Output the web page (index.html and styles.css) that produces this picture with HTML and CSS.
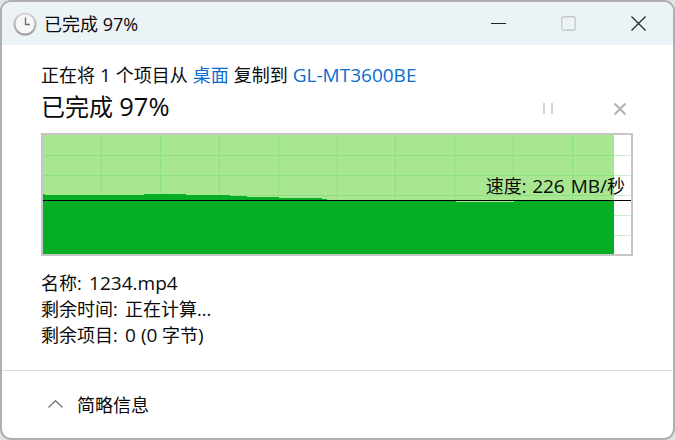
FILE: index.html
```html
<!DOCTYPE html>
<html lang="zh-CN">
<head>
  <meta charset="UTF-8">
  <title>已完成 97%</title>
  <link rel="stylesheet" href="styles.css">
</head>
<body>
  <div class="window">
    <div class="titlebar">
      <svg class="clock" width="24" height="24" viewBox="0 0 24 24">
        <defs>
          <linearGradient id="ring" x1="0" y1="0" x2="0" y2="1">
            <stop offset="0" stop-color="#d8d8d8"/>
            <stop offset="1" stop-color="#9a9a9a"/>
          </linearGradient>
        </defs>
        <circle cx="12" cy="12" r="11.5" fill="url(#ring)"/>
        <circle cx="12" cy="12" r="9.5" fill="#f6f6f6"/>
        <path d="M12.5 5.5V12.5H17" fill="none" stroke="#707070" stroke-width="1.4"/>
      </svg>
      <span class="title">已完成 97%</span>
      <div class="winbtns">
        <svg width="15" height="15" viewBox="0 0 15 15"><path d="M0 7.5H15" stroke="#222" stroke-width="1"/></svg>
        <svg width="15" height="15" viewBox="0 0 15 15"><rect x="0.75" y="0.75" width="13.5" height="13.5" rx="2" fill="none" stroke="#c4c8ca" stroke-width="1.3"/></svg>
        <svg width="15" height="15" viewBox="0 0 15 15"><path d="M0.5 0.5L14.5 14.5M14.5 0.5L0.5 14.5" stroke="#222" stroke-width="1.2"/></svg>
      </div>
    </div>

    <div class="content">
      <p class="from">正在将 <span class="lat">1</span> 个项目从 <a class="place">桌面</a> 复制到 <a class="place lat">GL-MT3600BE</a></p>
      <div class="status">
        <h1>已完成 <span class="pct">97%</span></h1>
        <div class="ctrls">
          <svg width="10" height="12" viewBox="0 0 10 12"><path d="M1 0V11M9 0V11" stroke="#c8c8c8" stroke-width="1.6"/></svg>
          <svg width="12" height="12" viewBox="0 0 12 12"><path d="M0.5 0.5L11.5 11.5M11.5 0.5L0.5 11.5" stroke="#b4b4b4" stroke-width="2.2"/></svg>
        </div>
      </div>

      <div class="chart">
        <svg width="588" height="119" viewBox="43 135 588 119">
          <g stroke="#c6efc6" stroke-width="1">
            <path d="M43 155.5H631M43 175.5H631M43 195.5H631M43 215.5H631M43 235.5H631"/>
          </g>
          <rect x="43" y="135" width="571" height="119" fill="#a9e691"/>
          <g stroke="#8fdf85" stroke-width="1">
            <path d="M43 155.5H614M43 175.5H614M43 195.5H614"/>
            <path d="M101.5 135V201M160.5 135V201M219.5 135V201M278.5 135V201M337.5 135V201M395.5 135V201M454.5 135V201M513.5 135V201M572.5 135V201"/>
          </g>
          <path fill="#06ae25" d="M43 194H45V195H144V194H186V195H230V196H247V197H279V198H322V199H327V200H385V201H456V202H514V201H614V254H43Z"/>
          <path d="M43 200.5H631" stroke="#000" stroke-width="1"/>
        </svg>
        <span class="speed">速度: <span class="lat">226 MB/</span>秒</span>
      </div>

      <div class="details">
        <div>名称: &nbsp;<span class="val lat">1234.mp4</span></div>
        <div>剩余时间: &nbsp;<span class="val">正在计算...</span></div>
        <div>剩余项目: &nbsp;<span class="val"><span class="lat">0 (0</span> 字节<span class="lat">)</span></span></div>
      </div>
    </div>

    <div class="footer">
      <svg width="15" height="8" viewBox="0 0 15 8"><path d="M0.5 7.5L7.5 0.7L14.5 7.5" fill="none" stroke="#777" stroke-width="1.3"/></svg>
      <span>简略信息</span>
    </div>
  </div>
</body>
</html>
```

FILE: styles.css
```css
html, body {
  margin: 0;
  padding: 0;
  background: #e4e4e4;
}

body {
  font-family: "Open Sans", "Noto Sans CJK SC", sans-serif;
  color: #0a0a0a;
  font-size: 18px;
}

.lat {
  font-size: 19px;
}

.window {
  width: 675px;
  height: 440px;
  box-sizing: border-box;
  border: 2px solid #b0b0b0;
  border-radius: 11px;
  background: #fff;
  overflow: hidden;
  display: flex;
  flex-direction: column;
}

.titlebar {
  height: 43px;
  flex: none;
  background: #ecf3f7;
  display: flex;
  align-items: center;
  padding-left: 11px;
}

.clock {
  margin-right: 7px;
}

.title {
  line-height: 24px;
}

.winbtns {
  margin-left: auto;
  margin-right: 27px;
  display: flex;
  width: 155px;
  justify-content: space-between;
}

.content {
  padding: 17px 0 0 39px;
  flex: 1;
}

.from {
  margin: 0;
  line-height: 26px;
  word-spacing: 0.3px;
}

.place {
  color: #0a6cce;
}

.status {
  display: flex;
  align-items: center;
  height: 30px;
  margin-top: 3px;
  margin-bottom: 12px;
}

h1 {
  margin: 0;
  font-size: 24px;
  font-weight: 400;
  line-height: 30px;
}

.pct {
  font-size: 25.5px;
}

.ctrls {
  margin-top: 6px;
  margin-left: auto;
  margin-right: 47px;
  display: flex;
  gap: 61px;
}

.chart {
  position: relative;
  width: 588px;
  height: 119px;
  border: 2px solid #c6c6c6;
  line-height: 0;
}

.speed {
  position: absolute;
  right: 6px;
  top: 39px;
  line-height: 24px;
  word-spacing: 1px;
}

.details {
  margin-top: 14px;
  line-height: 26px;
}

.val {
  margin-left: -2px;
}

.footer {
  height: 68px;
  box-sizing: border-box;
  flex: none;
  border-top: 1px solid #dcdcdc;
  display: flex;
  align-items: center;
  padding-left: 46px;
  padding-bottom: 2px;
  gap: 14px;
}
```
